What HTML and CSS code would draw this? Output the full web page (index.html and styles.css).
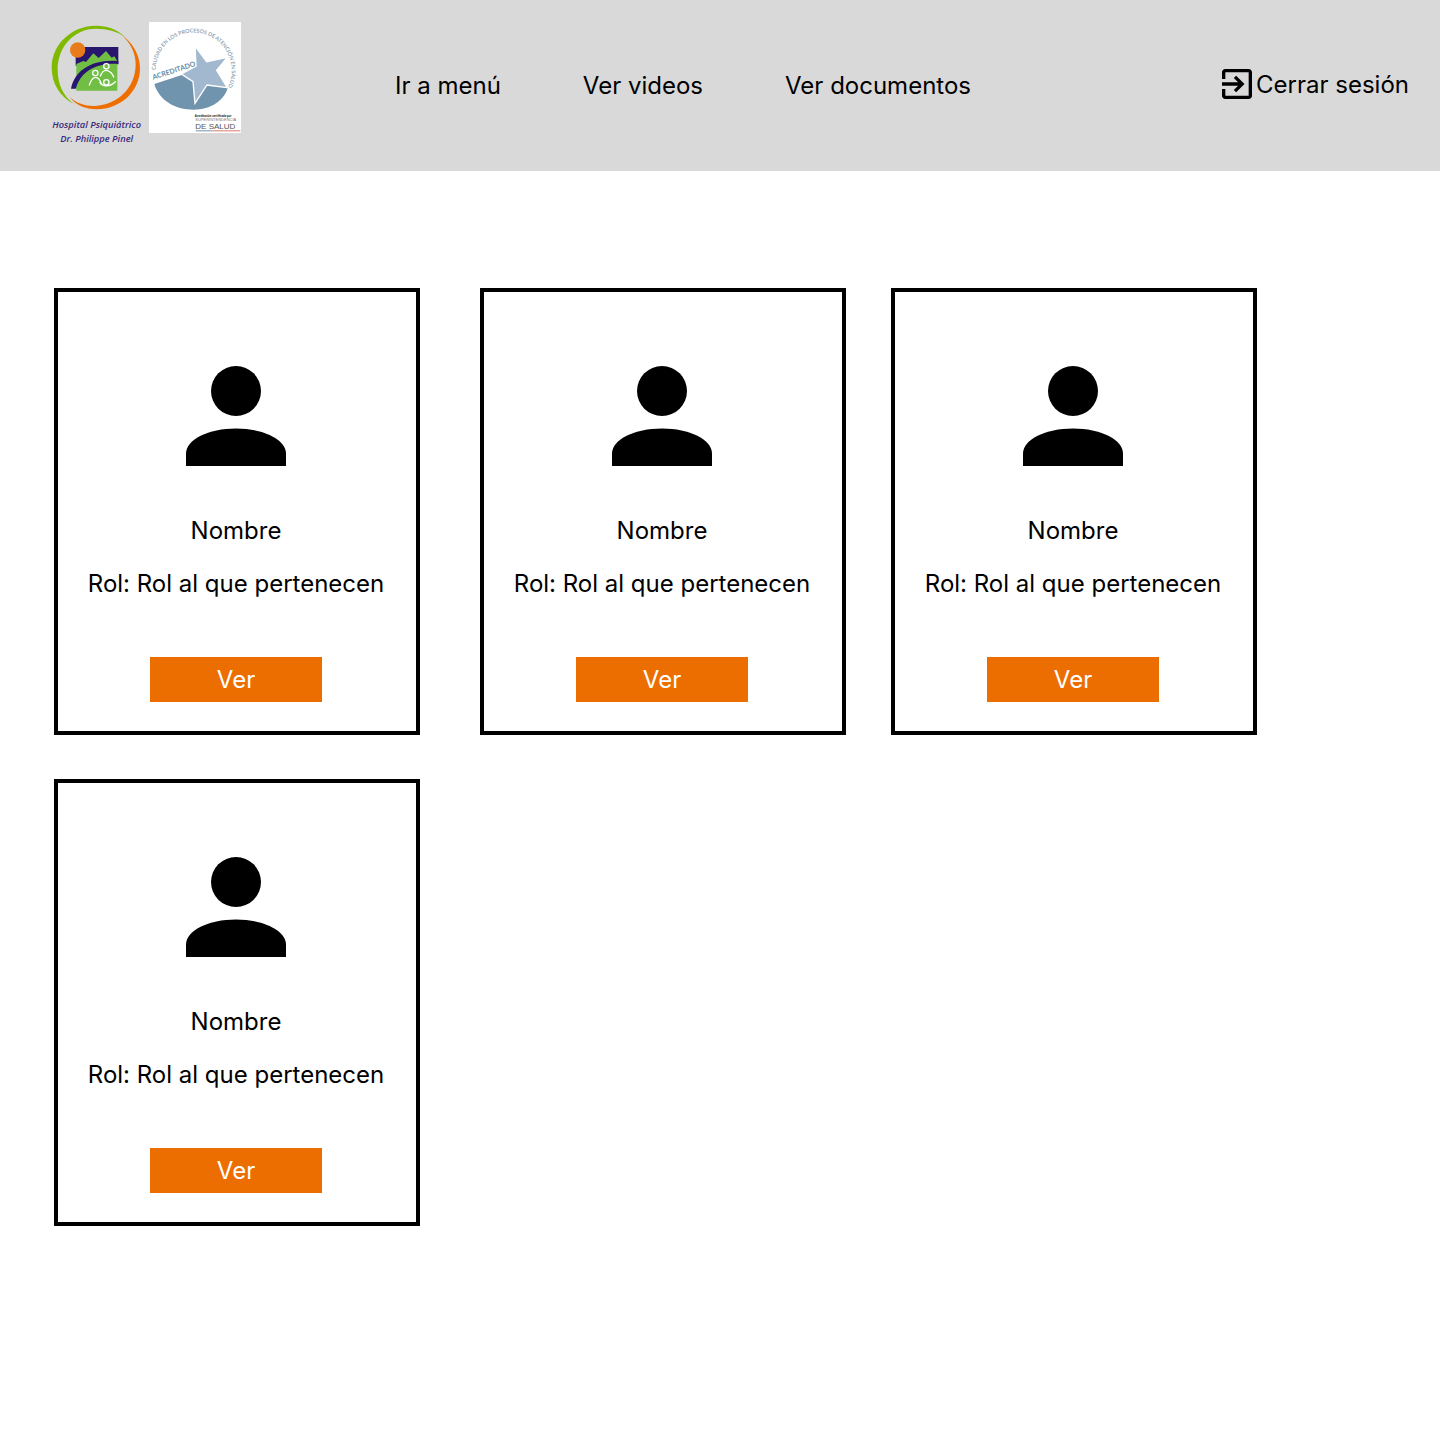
FILE: index.html
```html
<!DOCTYPE html>
<html lang="es">
<head>
  <meta charset="utf-8">
  <meta name="viewport" content="width=device-width, initial-scale=1">
  <title>Hospital Psiquiátrico Dr. Philippe Pinel</title>
  <link rel="stylesheet" href="styles.css">
</head>
<body>
  <svg class="sprite" aria-hidden="true">
    <symbol id="person" viewBox="0 0 100 100">
      <circle cx="50" cy="25" r="25"/>
      <path d="M50 62.500C22.400 62.500 0 73.700 0 87.500V100H100V87.500C100 73.700 77.600 62.500 50 62.500Z"/>
    </symbol>
  </svg>

  <header class="header">
    <div class="logos">
      <svg class="logo" width="92" height="124" viewBox="18 18 276 372" role="img" aria-label="Hospital Psiquiátrico Dr. Philippe Pinel">
        <path fill="#7fba00" d="M243 62C219 40 190 29 156 29C82 29 23 86 23 155C23 203 49 243 90 264C58 240 41 205 41 161C41 92 90 38 156 38C190 38 219 46 243 62Z"/>
        <path fill="#ee6f00" d="M232 56C265 79 288 115 288 157C288 226 230 280 158 280C124 280 96 268 77 244C100 263 125 271 153 270C220 267 275 216 275 145C275 111 259 79 232 56Z"/>
        <path fill="#28156e" d="M95 93H223V145L95 150Z"/>
        <path fill="#70bf44" d="M97 144L118 135L126 138L148 112L164 126L186 105L203 125L211 121L220 136V224H97Z"/>
        <path fill="#28156e" d="M81 218C91 163 146 128 223 135V144C155 140 109 168 96 218Z"/>
        <circle cx="101" cy="102" r="23" fill="#e87b1c"/>
        <g fill="none" stroke="#fff" stroke-width="4" stroke-linecap="round" stroke-linejoin="round">
          <circle cx="154" cy="171" r="8"/>
          <circle cx="187" cy="151" r="8"/>
          <circle cx="187" cy="199" r="8"/>
          <path d="M136 207C141 192 147 184 155 184C163 184 168 192 172 204"/>
          <path d="M169 180C176 163 184 162 190 164C200 167 205 173 209 183"/>
          <path d="M168 200C176 213 198 213 214 197"/>
        </g>
        <text class="logo-name" x="158" y="336" text-anchor="middle">Hospital Psiquiátrico</text>
        <text class="logo-name" x="158" y="379" text-anchor="middle">Dr. Philippe Pinel</text>
      </svg>
      <svg class="logo" width="92" height="111" viewBox="15 18 276 333" role="img" aria-label="Acreditado, Superintendencia de Salud">
        <defs>
          <path id="seal-arc" d="M35 162A114 114 0 1 1 236 237"/>
        </defs>
        <path fill="#fff" d="M15 18H291V351H15Z"/>
        <path fill="#7094ad" d="M31 204L120 175L252 214C240 255 200 281 149 281C91 281 45 252 31 204Z"/>
        <path fill="#a2b8cf" stroke="#fff" stroke-width="4" d="M153 90L188 137L250 124L218 163L250 215L189 207L153 262L147 197L112 174L156 150Z"/>
        <text class="seal-arc-text"><textPath href="#seal-arc">CALIDAD EN LOS PROCESOS DE ATENCIÓN EN SALUD</textPath></text>
        <text class="seal-title" x="28" y="191" transform="rotate(-18 28 191)">ACREDITADO</text>
        <text class="seal-note" x="152" y="304">Acreditación certificada por</text>
        <text class="seal-owner" x="154" y="316">SUPERINTENDENCIA</text>
        <text class="seal-health" x="154" y="340">DE SALUD</text>
        <path fill="#7094ad" d="M155 343H205V346H155Z"/>
        <path fill="#d87970" d="M205 343H289V346H205Z"/>
      </svg>
    </div>
    <nav class="nav">
      <a class="link" href="#menu">Ir a menú</a>
      <a class="link" href="#videos">Ver videos</a>
      <a class="link" href="#documentos">Ver documentos</a>
    </nav>
    <a class="link logout" href="#salir">
      <svg class="logout-icon" width="30" height="30" viewBox="3 3 18 18" aria-hidden="true">
        <path d="M10.090 15.590L11.500 17L16.500 12L11.500 7L10.090 8.410L12.670 11H3V13H12.670L10.090 15.590ZM19 3H5C3.890 3 3 3.900 3 5V9H5V5H19V19H5V15H3V19C3 20.100 3.890 21 5 21H19C20.100 21 21 20.100 21 19V5C21 3.900 20.100 3 19 3Z"/>
      </svg>
      Cerrar sesión
    </a>
  </header>

  <main class="cards">
    <article class="card">
      <svg class="avatar" aria-hidden="true"><use href="#person"/></svg>
      <p class="name">Nombre</p>
      <p class="role">Rol: Rol al que pertenecen</p>
      <button class="view" type="button">Ver</button>
    </article>
    <article class="card">
      <svg class="avatar" aria-hidden="true"><use href="#person"/></svg>
      <p class="name">Nombre</p>
      <p class="role">Rol: Rol al que pertenecen</p>
      <button class="view" type="button">Ver</button>
    </article>
    <article class="card">
      <svg class="avatar" aria-hidden="true"><use href="#person"/></svg>
      <p class="name">Nombre</p>
      <p class="role">Rol: Rol al que pertenecen</p>
      <button class="view" type="button">Ver</button>
    </article>
    <article class="card">
      <svg class="avatar" aria-hidden="true"><use href="#person"/></svg>
      <p class="name">Nombre</p>
      <p class="role">Rol: Rol al que pertenecen</p>
      <button class="view" type="button">Ver</button>
    </article>
  </main>
</body>
</html>
```
FILE: styles.css
```css
* {
  box-sizing: border-box;
}

body {
  margin: 0;
  background: #fff;
  color: #000;
  font-family: Inter, "Liberation Sans", sans-serif;
  font-size: 24px;
  line-height: 29px;
}

.sprite {
  display: none;
}

.header {
  display: flex;
  align-items: center;
  padding: 22px 31px 25px 50px;
  background: #d9d9d9;
}

.logos {
  display: flex;
  align-items: flex-start;
  gap: 7px;
}

.logo {
  display: block;
}

.logo-name {
  fill: #3b2a7d;
  font-family: "Open Sans", sans-serif;
  font-size: 28px;
  font-style: italic;
  font-weight: 600;
}

.seal-arc-text {
  fill: #8fa5b6;
  font-family: Lato, sans-serif;
  font-size: 16px;
  font-weight: 700;
}

.seal-title {
  fill: #5f89a5;
  font-family: Lato, sans-serif;
  font-size: 21px;
  font-weight: 700;
}

.seal-note {
  fill: #222;
  font-family: "Open Sans", sans-serif;
  font-size: 8px;
  font-weight: 700;
}

.seal-owner {
  fill: #777;
  font-family: "Liberation Sans", sans-serif;
  font-size: 12px;
}

.seal-health {
  fill: #555;
  font-family: "Liberation Sans", sans-serif;
  font-size: 24px;
}

.nav {
  display: flex;
  gap: 82px;
  margin-left: 154px;
  padding-top: 2px;
}

.link {
  color: inherit;
  text-decoration: none;
  white-space: nowrap;
}

.logout {
  display: flex;
  align-items: center;
  gap: 4px;
  margin-left: auto;
}

.logout-icon {
  display: block;
}

.cards {
  display: grid;
  grid-template-columns: 426px 411px 1fr;
  row-gap: 44px;
  padding: 117px 54px 44px;
}

.card {
  display: flex;
  flex-direction: column;
  align-items: center;
  width: 366px;
  padding: 74px 2px 29px 0;
  border: 4px solid #000;
}

.avatar {
  width: 100px;
  height: 100px;
}

.name {
  margin: 50px 0 24px;
}

.role {
  margin: 0;
}

.view {
  width: 172px;
  height: 45px;
  margin-top: 59px;
  padding: 0;
  border: 0;
  background: #ed6e00;
  color: #fff;
  font: inherit;
  cursor: pointer;
}
```
